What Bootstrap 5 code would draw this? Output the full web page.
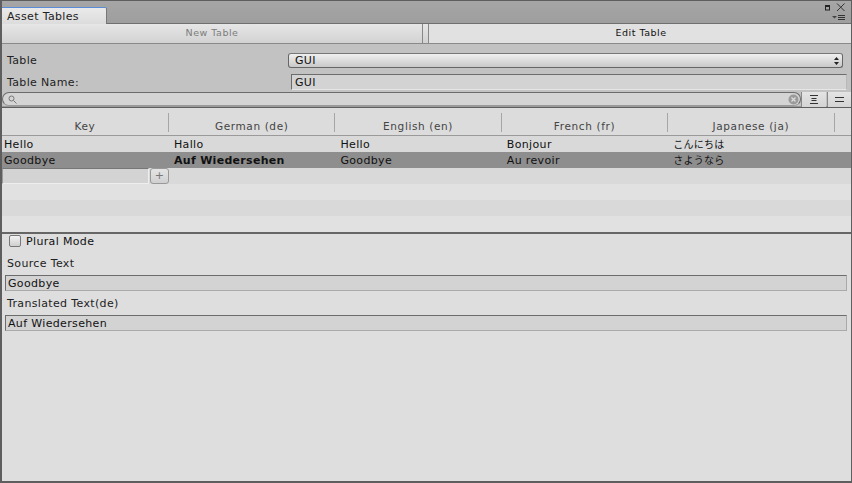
<!DOCTYPE html>
<html lang="en">
<head>
<meta charset="utf-8">
<title>Asset Tables</title>
<link href="https://cdn.jsdelivr.net/npm/bootstrap@5.3.0/dist/css/bootstrap.min.css" rel="stylesheet">
<style>
html,body{height:483px;overflow:hidden;background:#5e5e5e}
body{font:11px/14px "DejaVu Sans","Noto Sans CJK JP",sans-serif;letter-spacing:.35px;color:#111}
.win{height:483px;padding:1px 1px 2px 2px;background:#5e5e5e}
.win>*{flex:none}
.tabbar{height:23px;background:linear-gradient(#a6a6a6,#9e9e9e);border-bottom:1px solid #6f6f6f}
.wintab{width:105px;height:17px;margin-top:6px;background:linear-gradient(#eaeaea,#dcdcdc);border-top:1px solid #5a8fd8;border-right:1px solid #777;border-top-right-radius:2px;padding-left:5px;line-height:17px;color:#222}
.wctl{width:30px;height:22px}
.tbar{height:20px;background:linear-gradient(#e6e6e6,#d2d2d2);border-bottom:1px solid #8a8a8a}
.tbtn{line-height:18px;font-size:9.5px;letter-spacing:.5px;text-align:center}
.tbtn.off{width:421px;color:#7c7c7c;border-right:1px solid #888}
.tbtn.on{flex:1;background:#e1e1e1;margin-left:5px;border-left:1px solid #888;color:#111;padding-left:2px}
.props{height:48px;background:#c2c2c2;padding:5px 4px 0 5px}
.prow{height:22px;align-items:flex-start}
.plabel{width:281px;line-height:24px;color:#222}
.sel{flex:1;height:15px;margin:4px 4px 0 0;border:1px solid #666;border-top-color:#777;border-radius:3px;background:linear-gradient(#f0f0f0,#c8c8c8);padding-left:6px;line-height:13px;position:relative}
.sel svg{position:absolute;right:3px;top:3px}
.fld{flex:1;height:16px;margin:3px 0 0 3px;border:1px solid #6c6c6c;border-right-color:#b8b8b8;border-bottom-color:#e6e6e6;background:#d3d3d3;padding-left:3px;line-height:15px}
.searchrow{height:15px;background:#c2c2c2;border-bottom:1px solid #999}
.search{flex:1;height:14px;border:1px solid #6b6b6b;border-bottom-color:#9a9a9a;border-radius:7px;background:#d4d4d4;position:relative}
.search .sic{position:absolute;left:5px;top:2px}
.search .cic{position:absolute;right:1px;top:1px}
.tool{height:15px;width:25px;background:linear-gradient(#e4e4e4,#d4d4d4);border-left:1px solid #888;display:flex;align-items:center;justify-content:center}
.tool.nar{width:24px;margin-left:1px}
.hdr{height:28px;margin-top:1px;background:#dcdcdc;border-bottom:1px solid #9a9a9a;padding-top:5px}
.hcell{width:166.4px;height:19px;border-right:1px solid #a6a6a6;text-align:center;line-height:26px;color:#444;font-size:10.5px;letter-spacing:.62px;white-space:nowrap}
.hcell.first{width:167px}
.trow{height:16px;line-height:18px;background:#e1e1e1}
.trow.alt{background:#d9d9d9}
.trow.sel2{background:#8e8e8e}
.tcell{width:166.4px;padding-left:4px;white-space:nowrap}
.tcell.first{width:168px;padding-left:2px}
.tcell b{font-weight:700;letter-spacing:.3px}
.tcell.ja{font-size:10px;letter-spacing:.3px;line-height:17px}
.addfld{width:147px;height:16px;background:#d3d3d3;border:1px solid #777;border-right-color:#eee;border-bottom-color:#eee;border-left-color:#999}
.addbtn{width:19px;height:16px;margin-left:1px;border:1px solid #999;border-radius:3px;background:linear-gradient(#e4e4e4,#d0d0d0);text-align:center;line-height:13px;color:#777}
.tablearea{height:96px}
.lower{flex:1 1 auto!important;background:#dedede;border-top:2px solid #666;padding:0 4px 0 3px}
.pluralrow{height:14px}
.pluraltxt{padding-top:2px}
.chk{width:12px;height:12px;border:1px solid #777;border-radius:2px;background:linear-gradient(#f3f3f3,#cfcfcf);margin-left:4px;margin-right:5px}
.llabel{height:20px;line-height:22px;padding-left:2px;color:#222}
.lfld{height:16px;background:#d3d3d3;border:1px solid #6c6c6c;border-right-color:#aaa;border-bottom-color:#aaa;padding-left:2px;line-height:15px}
.mt5{margin-top:5px}
.mt2{margin-top:2px}
</style>
</head>
<body>
<div class="win d-flex flex-column">
  <div class="tabbar d-flex justify-content-between">
    <div class="wintab">Asset Tables</div>
    <div class="wctl">
      <svg width="30" height="22" viewBox="0 0 30 22"><rect x="4.5" y="5" width="4" height="4" fill="none" stroke="#222"/><rect x="4" y="4" width="5" height="2" fill="#222"/><path d="M16 2.5l7.5 7.5M23.5 2.5L16 10" stroke="#333" fill="none"/><path d="M11 15h5l-2.5 2.5z" fill="#444"/><path d="M17 14.5h7M17 16.5h7M17 18.5h7" stroke="#333" fill="none"/></svg>
    </div>
  </div>
  <div class="tbar d-flex">
    <div class="tbtn off">New Table</div>
    <div class="tbtn on">Edit Table</div>
  </div>
  <div class="props">
    <div class="prow d-flex"><div class="plabel">Table</div><div class="sel">GUI<svg width="5" height="8" viewBox="0 0 5 8"><path d="M2.5 0L5 3H0zM2.5 8L0 5h5z" fill="#222"/></svg></div></div>
    <div class="prow d-flex"><div class="plabel">Table Name:</div><div class="fld">GUI</div></div>
  </div>
  <div class="searchrow d-flex">
    <div class="search">
      <svg class="sic" width="9" height="9" viewBox="0 0 9 9"><circle cx="3.5" cy="3.5" r="2.5" fill="none" stroke="#777"/><path d="M5.5 5.5L8.5 8.5" stroke="#777"/></svg>
      <svg class="cic" width="11" height="11" viewBox="0 0 11 11"><circle cx="5.5" cy="5.5" r="5" fill="#9a9a9a"/><path d="M3.5 3.5l4 4M7.5 3.5l-4 4" stroke="#ddd" stroke-width="1.2"/></svg>
    </div>
    <div class="tool"><svg width="8" height="9" viewBox="0 0 8 9"><path d="M0 .5h8M1.5 3.5h5M1.5 5.5h5M0 8.5h8" stroke="#333" fill="none"/></svg></div>
    <div class="tool nar"><svg width="9" height="5" viewBox="0 0 9 5"><path d="M0 .5h9M0 4.5h9" stroke="#333" fill="none"/></svg></div>
  </div>
  <div class="hdr d-flex">
    <div class="hcell first">Key</div>
    <div class="hcell">German (de)</div>
    <div class="hcell">English (en)</div>
    <div class="hcell">French (fr)</div>
    <div class="hcell">Japanese (ja)</div>
  </div>
  <div class="tablearea">
    <div class="trow alt d-flex"><div class="tcell first">Hello</div><div class="tcell">Hallo</div><div class="tcell">Hello</div><div class="tcell">Bonjour</div><div class="tcell ja">こんにちは</div></div>
    <div class="trow sel2 d-flex"><div class="tcell first">Goodbye</div><div class="tcell"><b>Auf Wiedersehen</b></div><div class="tcell">Goodbye</div><div class="tcell">Au revoir</div><div class="tcell ja">さようなら</div></div>
    <div class="trow alt d-flex"><div class="addfld"></div><div class="addbtn">+</div></div>
    <div class="trow"></div>
    <div class="trow alt"></div>
    <div class="trow"></div>
  </div>
  <div class="lower">
    <div class="pluralrow d-flex align-items-center"><div class="chk"></div><span class="pluraltxt">Plural Mode</span></div>
    <div class="llabel mt5">Source Text</div>
    <div class="lfld mt2">Goodbye</div>
    <div class="llabel mt2">Translated Text(de)</div>
    <div class="lfld mt2">Auf Wiedersehen</div>
  </div>
</div>
</body>
</html>
